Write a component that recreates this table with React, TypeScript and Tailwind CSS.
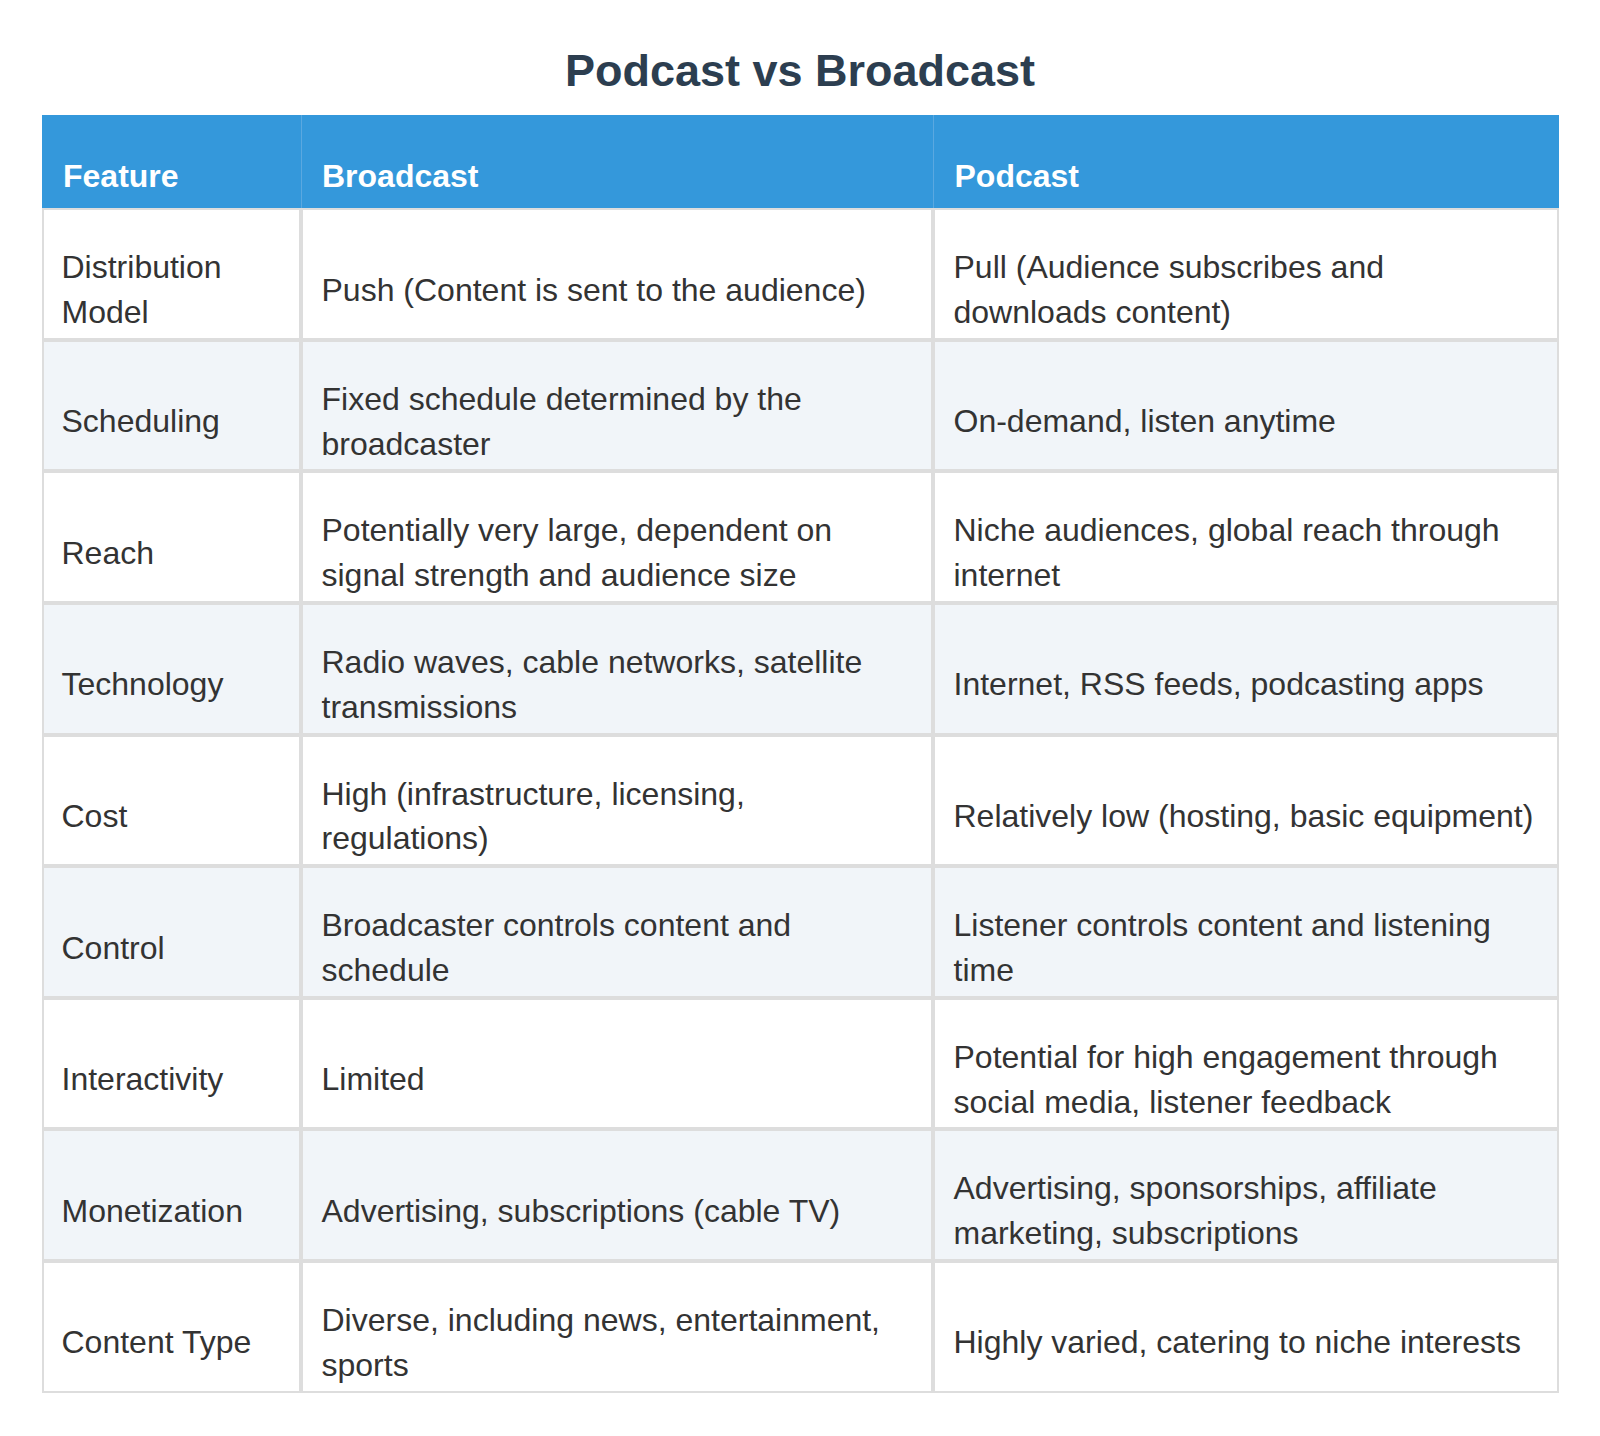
import React from "react";

const rows: [string[], string[], string[]][] = [
  [["Distribution", "Model"], ["Push (Content is sent to the audience)"], ["Pull (Audience subscribes and", "downloads content)"]],
  [["Scheduling"], ["Fixed schedule determined by the", "broadcaster"], ["On-demand, listen anytime"]],
  [["Reach"], ["Potentially very large, dependent on", "signal strength and audience size"], ["Niche audiences, global reach through", "internet"]],
  [["Technology"], ["Radio waves, cable networks, satellite", "transmissions"], ["Internet, RSS feeds, podcasting apps"]],
  [["Cost"], ["High (infrastructure, licensing,", "regulations)"], ["Relatively low (hosting, basic equipment)"]],
  [["Control"], ["Broadcaster controls content and", "schedule"], ["Listener controls content and listening", "time"]],
  [["Interactivity"], ["Limited"], ["Potential for high engagement through", "social media, listener feedback"]],
  [["Monetization"], ["Advertising, subscriptions (cable TV)"], ["Advertising, sponsorships, affiliate", "marketing, subscriptions"]],
  [["Content Type"], ["Diverse, including news, entertainment,", "sports"], ["Highly varied, catering to niche interests"]],
];

function Lines({ lines }: { lines: string[] }) {
  return (
    <>
      {lines.map((l, i) => (
        <React.Fragment key={i}>
          {i > 0 && <br />}
          {l}
        </React.Fragment>
      ))}
    </>
  );
}

export default function App() {
  return (
    <div
      className="min-h-[1436px] bg-white pt-[44px]"
      style={{ fontFamily: '"Liberation Sans", Arial, Helvetica, sans-serif' }}
    >
      <h1 className="mb-[17px] text-center text-[45px] font-bold leading-[54px] text-[#2c3e50]">
        Podcast vs Broadcast
      </h1>
      <table className="mx-auto w-[1517px] table-fixed border-separate border-spacing-0 text-[32px] leading-[44.8px] text-[#333333]">
        <colgroup>
          <col className="w-[259px]" />
          <col className="w-[632px]" />
          <col className="w-[626px]" />
        </colgroup>
        <thead>
          <tr className="bg-[#3498db]">
            <th className="border-0 pb-[9.5px] pl-[21.5px] pr-[10px] pt-[39px] text-left align-middle font-bold text-white">
              Feature
            </th>
            <th className="border-0 border-l border-[#5aa8e0] pb-[9.5px] pl-[20.5px] pr-[10px] pt-[39px] text-left align-middle font-bold text-white">
              Broadcast
            </th>
            <th className="border-0 border-l border-[#5aa8e0] pb-[9.5px] pl-[21px] pr-[10px] pt-[39px] text-left align-middle font-bold text-white">
              Podcast
            </th>
          </tr>
        </thead>
        <tbody>
          {rows.map((r, i) => (
            <tr key={i} className={i % 2 === 1 ? "bg-[#f1f5f9]" : "bg-white"}>
              {r.map((cell, j) => (
                <td
                  key={j}
                  className={
                    "whitespace-nowrap border-2 border-[#dddddd] pb-[3px] pr-[8px] pt-[35px] align-middle " +
                    (j === 0 ? "pl-[18px]" : "pl-[19px]")
                  }
                >
                  <Lines lines={cell} />
                </td>
              ))}
            </tr>
          ))}
        </tbody>
      </table>
    </div>
  );
}
